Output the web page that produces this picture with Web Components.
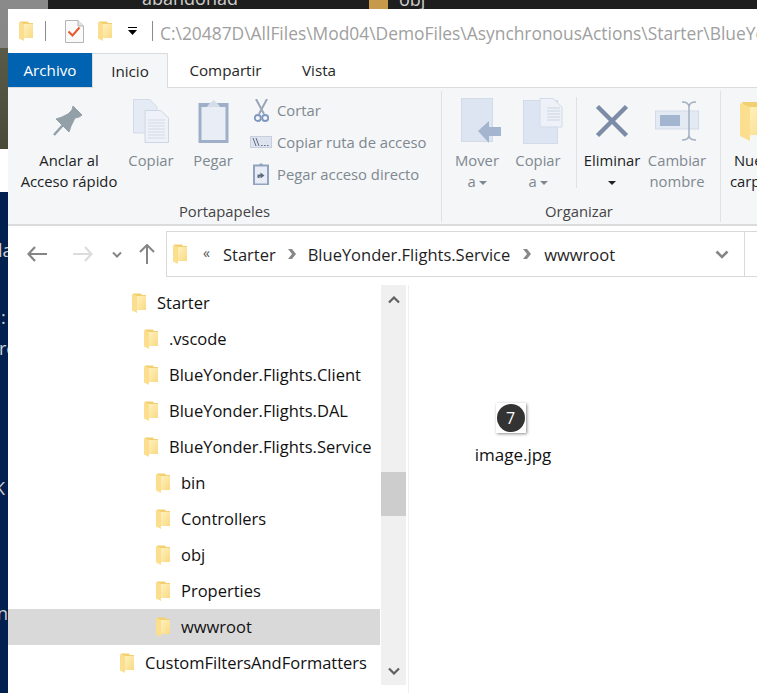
<!DOCTYPE html>
<html lang="es">
<head>
<meta charset="utf-8">
<title>wwwroot</title>
<style>
  html, body { margin: 0; padding: 0; }
  body { width: 757px; height: 693px; overflow: hidden; font-family: "Open Sans", "Noto Sans", sans-serif; }
</style>
</head>
<body>
<explorer-shot></explorer-shot>

<script>
const FONT = `"Open Sans", "Noto Sans", sans-serif`;

const folderSvg = (w, h) => `
  <svg width="${w}" height="${h}" viewBox="0 0 14 20" aria-hidden="true">
    <defs><linearGradient id="fg" x1="0" y1="0" x2="1" y2="1">
      <stop offset="0" stop-color="#fff0bd"/><stop offset="1" stop-color="#f8da82"/></linearGradient></defs>
    <path d="M1 .5H9L10 2H14V17H5Z" fill="#f2cf70"/>
    <path d="M5 3H14V17H5Z" fill="url(#fg)"/>
    <path d="M0 1 5 3V20L0 17.500Z" fill="#fbdf8e"/>
  </svg>`;

class FolderIcon extends HTMLElement {
  connectedCallback() {
    const w = +(this.getAttribute("w") || 14), h = +(this.getAttribute("h") || 20);
    this.attachShadow({ mode: "open" }).innerHTML =
      `<style>:host{display:inline-flex;flex:none}svg{display:block}</style>${folderSvg(w, h)}`;
  }
}
customElements.define("folder-icon", FolderIcon);

class TitleBar extends HTMLElement {
  constructor() {
    super();
    this.attachShadow({ mode: "open" }).innerHTML = `
      <style>
        :host { display: flex; align-items: center; height: 44px; background: #fff; padding-left: 11px; box-sizing: border-box; }
        .sep { width: 1px; height: 20px; background: #8c8c8c; flex: none; }
        .path { color: #a0a0a0; font: 17.4px ${FONT}; white-space: nowrap; margin: 3px 0 0 7px; }
        svg { display: block; flex: none; }
      </style>
      <folder-icon></folder-icon>
      <span class="sep" style="margin-left:12px"></span>
      <svg style="margin-left:19px" width="19" height="23" viewBox="0 0 19 23">
        <path d="M.5.5H13L18.500 6V22.500H.5Z" fill="#fafafa" stroke="#b5b5b5"/>
        <path d="M13 .5V6H18.500" fill="#e4e4e4" stroke="#b5b5b5"/>
        <path d="M3.500 11.500 7.500 15.500 14.500 7.500" fill="none" stroke="#e8592b" stroke-width="2"/>
      </svg>
      <folder-icon style="margin-left:14px"></folder-icon>
      <svg style="margin-left:16px" width="9" height="9" viewBox="0 0 9 9">
        <path d="M0 0H9V1H0ZM0 3H9L4.500 8Z" fill="#000"/>
      </svg>
      <span class="sep" style="margin-left:15px"></span>
      <span class="path">C:\\20487D\\AllFiles\\Mod04\\DemoFiles\\AsynchronousActions\\Starter\\BlueYo</span>`;
  }
}
customElements.define("title-bar", TitleBar);

class RibbonTabs extends HTMLElement {
  constructor() {
    super();
    this.attachShadow({ mode: "open" }).innerHTML = `
      <style>
        :host { display: flex; height: 35px; background: #fff; border-bottom: 1px solid #dadbdc; box-sizing: border-box; font: 15.2px ${FONT}; color: #262626; }
        span { display: flex; align-items: center; justify-content: center; box-sizing: border-box; }
        .file { width: 84px; background: #0063b1; color: #fff; }
        .home { width: 76px; height: 35px; background: #f5f6f7; border: 1px solid #dadbdc; border-bottom: 0; }
        .tab { width: 71px; margin-left: 22px; }
        .tab + .tab { width: 34px; margin-left: 41px; }
      </style>
      <span class="file">Archivo</span>
      <span class="home">Inicio</span>
      <span class="tab">Compartir</span>
      <span class="tab">Vista</span>`;
  }
}
customElements.define("ribbon-tabs", RibbonTabs);

class RibbonGroup extends HTMLElement {
  constructor() {
    super();
    this.attachShadow({ mode: "open" }).innerHTML = `
      <style>
        :host { display: flex; flex-direction: column; box-sizing: border-box; border-right: 1px solid #dfe1e4; margin-top: 3px; height: 131px; flex: none; }
        .items { display: flex; flex: 1; min-height: 0; }
        .label { height: 22px; text-align: center; font: 14.800px ${FONT}; color: #444; line-height: 22px; white-space: nowrap; padding-right: var(--label-shift, 0); }
      </style>
      <div class="items"><slot></slot></div>
      <div class="label"></div>`;
  }
  connectedCallback() {
    this.shadowRoot.querySelector(".label").textContent = this.getAttribute("label") || "";
  }
}
customElements.define("ribbon-group", RibbonGroup);

class RibbonButton extends HTMLElement {
  constructor() {
    super();
    this.attachShadow({ mode: "open" }).innerHTML = `
      <style>
        :host { display: flex; flex-direction: column; align-items: center; flex: none; font: 14.800px/21px ${FONT}; color: #808890; text-align: center; white-space: nowrap; box-sizing: border-box; }
        :host([on]) { color: #222; }
        .ico { height: 56px; display: flex; align-items: center; justify-content: center; margin-top: 2px; margin-bottom: 1px; }
      </style>
      <div class="ico"><slot name="icon"></slot></div>
      <div><slot></slot></div>`;
  }
}
customElements.define("ribbon-button", RibbonButton);

class RibbonSmall extends HTMLElement {
  constructor() {
    super();
    this.attachShadow({ mode: "open" }).innerHTML = `
      <style>
        :host { display: flex; align-items: center; height: 32px; font: 14.800px ${FONT}; color: #808890; white-space: nowrap; }
        .ico { width: 22px; display: flex; justify-content: center; margin-right: 5px; }
      </style>
      <div class="ico"><slot name="icon"></slot></div><slot></slot>`;
  }
}
customElements.define("ribbon-small", RibbonSmall);

class NavBar extends HTMLElement {
  constructor() {
    super();
    this.attachShadow({ mode: "open" }).innerHTML = `
      <style>
        :host { display: flex; align-items: center; height: 59px; background: #fff; padding: 5px 0 8px; box-sizing: border-box; }
        svg { display: block; flex: none; }
        .box { display: flex; align-items: center; flex: 1; margin-left: 11px; height: 46px; border: 1px solid #d9d9d9; border-right: 0; box-sizing: border-box; font: 16.500px ${FONT}; color: #1f1f1f; white-space: nowrap; }
        .end { margin-left: auto; width: 45px; height: 100%; display: flex; align-items: center; justify-content: center; border-right: 1px solid #d9d9d9; box-sizing: border-box; margin-right: 12px; }
        .chev { margin: 0 12px; }
        .chev.b { margin: 0 13px; }
      </style>
      <svg style="margin-left:19px" width="20" height="16" viewBox="0 0 20 16"><path d="M8 1 1.500 8 8 15M2 8H20" fill="none" stroke="#858585" stroke-width="2.200"/></svg>
      <svg style="margin-left:26px" width="20" height="16" viewBox="0 0 20 16"><path d="M12 1 18.500 8 12 15M18 8H0" fill="none" stroke="#dcdcdc" stroke-width="2.200"/></svg>
      <svg style="margin-left:19px" width="10" height="7" viewBox="0 0 10 7"><path d="M1 1.500 5 5.500 9 1.500" fill="none" stroke="#858585" stroke-width="2"/></svg>
      <svg style="margin-left:17px" width="16" height="20" viewBox="0 0 16 20"><path d="M1 8 8 1 15 8M8 1.500V20" fill="none" stroke="#858585" stroke-width="2"/></svg>
      <div class="box">
        <folder-icon style="margin-left:6px"></folder-icon>
        <span style="margin-left:16px;font-size:14px;color:#555;position:relative;top:-2px">«</span>
        <span style="margin-left:13px">Starter</span>
        <svg class="chev" width="8" height="10" viewBox="0 0 8 10"><path d="M0 0H4L8 5 4 10H0L4 5Z" fill="#888"/></svg>
        <span>BlueYonder.Flights.Service</span>
        <svg class="chev b" width="8" height="10" viewBox="0 0 8 10"><path d="M0 0H4L8 5 4 10H0L4 5Z" fill="#888"/></svg>
        <span>wwwroot</span>
        <div class="end"><svg width="14" height="9" viewBox="0 0 14 9"><path d="M1.500 1.500 7 7 12.500 1.500" fill="none" stroke="#858585" stroke-width="2.600"/></svg></div>
      </div>`;
  }
}
customElements.define("nav-bar", NavBar);

class TreeRow extends HTMLElement {
  constructor() {
    super();
    this.attachShadow({ mode: "open" }).innerHTML = `
      <style>
        :host { display: flex; align-items: center; height: 36px; padding-left: calc(var(--lvl, 0) * 12px + 112px); font: 16.500px ${FONT}; color: #111; white-space: nowrap; box-sizing: border-box; }
        :host([sel]) { background: #d9d9d9; }
        .t { margin-left: 11px; position: relative; top: -1px; }
      </style>
      <folder-icon></folder-icon><span class="t"><slot></slot></span>`;
  }
}
customElements.define("tree-row", TreeRow);

class NavTree extends HTMLElement {
  constructor() {
    super();
    this.attachShadow({ mode: "open" }).innerHTML = `
      <style>
        :host { display: flex; width: 401px; height: 408px; flex: none; background: #fff; border-right: 1px solid #f0f0f0; box-sizing: border-box; }
        .rows { width: 372px; flex: none; padding-right: 1px; }
        .bar { width: 25px; height: 400px; background: #f0f0f0; display: flex; flex-direction: column; align-items: center; }
        .btn { height: 29px; display: flex; align-items: center; justify-content: center; flex: none; }
        .track { flex: 1; width: 100%; }
        .thumb { height: 44px; margin-top: 158px; background: #cdcdcd; }
        svg { display: block; }
      </style>
      <div class="rows"><slot></slot></div>
      <div class="bar">
        <div class="btn"><svg width="12" height="8" viewBox="0 0 12 8"><path d="M1 6.500 6 1.500 11 6.500" fill="none" stroke="#606060" stroke-width="2.200"/></svg></div>
        <div class="track"><div class="thumb"></div></div>
        <div class="btn"><svg width="12" height="8" viewBox="0 0 12 8"><path d="M1 1.500 6 6.500 11 1.500" fill="none" stroke="#606060" stroke-width="2.200"/></svg></div>
      </div>`;
  }
}
customElements.define("nav-tree", NavTree);

class FileItem extends HTMLElement {
  constructor() {
    super();
    this.attachShadow({ mode: "open" }).innerHTML = `
      <style>
        :host { display: flex; flex-direction: column; align-items: center; width: 100px; font: 17px/20px ${FONT}; color: #111; }
        .thumb { width: 30px; height: 30px; background: #fff; box-shadow: 1px 1px 3px rgba(0,0,0,.45); display: flex; align-items: center; justify-content: center; margin-right: 5px; margin-bottom: 12px; }
        .num { width: 28px; height: 28px; border-radius: 50%; background: #333; color: #fff; font: 16px/28px ${FONT}; text-align: center; }
      </style>
      <div class="thumb"><div class="num"><slot name="num"></slot></div></div>
      <div><slot></slot></div>`;
  }
}
customElements.define("file-item", FileItem);

class ExplorerShot extends HTMLElement {
  constructor() {
    super();
    this.attachShadow({ mode: "open" }).innerHTML = `
      <style>
        :host { display: block; position: relative; width: 757px; height: 693px; overflow: hidden; padding: 9px 0 0 8px; box-sizing: border-box;
          background: linear-gradient(#002050,#002050) 0 192px/8px 501px no-repeat,
                      linear-gradient(#fff,#fff) 0 149px/8px 43px no-repeat,
                      linear-gradient(#5a5a48,#4a4a38) 0 48px/8px 101px no-repeat,
                      linear-gradient(#1e1e1e,#1e1e1e) 48px 0/709px 9px no-repeat,
                      linear-gradient(#8a8a8a,#5e5e5e); }
        .bg { position: absolute; color: #cfcfcf; font: 18px/24px ${FONT}; white-space: nowrap; }
        .orange { position: absolute; left: 369px; top: 0; width: 19px; height: 9px; background: #c79a4b; }
        .win { display: block; position: relative; z-index: 1; background: #fff; height: 684px; }
        .ribbon { display: flex; height: 138px; background: #f4f6f8; border-bottom: 2px solid #dadbdc; box-sizing: border-box; overflow: hidden; }
        .body { display: flex; background: #fff; }
        .pane { flex: 1; display: flex; padding: 118px 0 0 54px; box-sizing: border-box; }
        .col { display: flex; flex-direction: column; padding-top: 3px; margin-left: 5px; }
        .vsep { width: 1px; height: 91px; background: #dfe1e4; margin: 6px 0 0 12px; flex: none; }
        .dd { display: inline-block; width: 0; height: 0; border: 4px solid transparent; border-top-color: currentColor; border-bottom: 0; vertical-align: middle; margin-left: 3px; }
        svg { display: block; }
      </style>
      <span class="bg" style="left:142px;top:-14px">abandonad</span>
      <span class="orange"></span>
      <span class="bg" style="left:399px;top:-13px">obj</span>
      <span class="bg" style="left:-2px;top:238px">la</span>
      <span class="bg" style="left:1px;top:305px">:</span>
      <span class="bg" style="left:-1px;top:336px">re</span>
      <span class="bg" style="left:-6px;top:476px">K</span>
      <span class="bg" style="left:-3px;top:601px">n</span>
      <div class="win">
        <title-bar></title-bar>
        <ribbon-tabs></ribbon-tabs>
        <div class="ribbon">
          <ribbon-group label="Portapapeles" style="width:434px">
            <ribbon-button on style="width:122px;margin-right:-9px">
              <svg slot="icon" width="32" height="32" viewBox="0 0 32 32"><path d="M20 1 29 10 26 12 22 13 18 21 16 27 3 14 9 12 15 9 19 5Z" fill="#93a0a8" stroke="#93a0a8" stroke-linejoin="round"/><path d="M1 30 10 20" stroke="#93a0a8" stroke-width="2.500"/></svg>
              Anclar al<br>Acceso rápido
            </ribbon-button>
            <ribbon-button style="width:60px">
              <svg slot="icon" width="36" height="44" viewBox="0 0 36 44"><path d="M.5.500H17L24 8V34H.5Z" fill="#e4ebf5" stroke="#d3dbe6"/><path d="M12 11.500H28L35.500 19V43.500H12Z" fill="#eef2f8" stroke="#cdd6e2"/><path d="M15 21H32M15 24H32M15 27H32M15 30H32M15 33H32M15 36H32M15 39H32" stroke="#d3dae5"/></svg>
              Copiar
            </ribbon-button>
            <ribbon-button style="width:64px">
              <svg slot="icon" width="31" height="43" viewBox="0 0 31 43"><rect x=".5" y="3" width="30" height="40" fill="#9fafc8"/><rect x="3.500" y="7" width="24" height="33" fill="#e8edf6"/><path d="M9 7 11 4 15.500 0 20 4 22 7Z" fill="#d5dcea"/></svg>
              Pegar
            </ribbon-button>
            <div class="col">
              <ribbon-small><svg slot="icon" width="15" height="23" viewBox="0 0 15 23"><path d="M2 0 10 15M13 0 5 15" stroke="#9aa6b8" stroke-width="2" fill="none"/><circle cx="3.800" cy="19" r="3" fill="none" stroke="#7e97c0" stroke-width="1.800"/><circle cx="11.200" cy="19" r="3" fill="none" stroke="#7e97c0" stroke-width="1.800"/></svg>Cortar</ribbon-small>
              <ribbon-small><svg slot="icon" width="22" height="12" viewBox="0 0 22 12"><rect x=".5" y=".5" width="21" height="11" fill="#dde4f0" stroke="#c5cfe0"/><path d="M3 2 6 10M6 2 9 10" stroke="#5d6a80" fill="none"/><path d="M11 9.500H19" stroke="#5d6a80" stroke-dasharray="1.500 1.500"/></svg>Copiar ruta de acceso</ribbon-small>
              <ribbon-small><svg slot="icon" width="16" height="22" viewBox="0 0 16 22"><rect x="1" y="2.500" width="14" height="19" fill="#e8edf5" stroke="#92a3bd" stroke-width="2"/><path d="M5 2.500 8 0 11 2.500Z" fill="#92a3bd"/><path d="M4.500 15V11.500H7.500V9.500L11.500 12.500 7.500 15.500V13.500H6.500V15Z" fill="#5d6a80"/></svg>Pegar acceso directo</ribbon-small>
            </div>
          </ribbon-group>
          <ribbon-group label="Organizar" style="width:279px;--label-shift:4px">
            <ribbon-button style="width:70px">
              <svg slot="icon" style="margin-left:8px" width="40" height="46" viewBox="0 0 40 46"><rect x=".5" y=".5" width="31" height="43" fill="#dde5f2" stroke="#d3dbe8"/><path d="M17 33 28 23V29H40V38H28V45Z" fill="#a4b5cf"/></svg>
              Mover<br>a<span class="dd"></span>
            </ribbon-button>
            <ribbon-button style="width:52px">
              <svg slot="icon" style="margin-left:10px" width="40" height="46" viewBox="0 0 40 46"><rect x=".5" y="2.500" width="34" height="43" fill="#dde5f2" stroke="#d3dbe8"/><path d="M17 .5H30L39 9V29H17Z" fill="#eef2f8" stroke="#d3dbe8"/><path d="M24 10H37M24 13H37M24 16H37M24 19H37M24 22H37" stroke="#cbd4e2"/></svg>
              Copiar<br>a<span class="dd"></span>
            </ribbon-button>
            <div class="vsep"></div>
            <ribbon-button on style="width:70px">
              <svg slot="icon" width="34" height="34" viewBox="0 0 34 34"><path d="M2.500 2.500 31.500 31.500M31.500 2.500 2.500 31.500" stroke="#7c8ba6" stroke-width="4.500"/></svg>
              Eliminar<br><span class="dd" style="margin:0"></span>
            </ribbon-button>
            <ribbon-button style="width:60px">
              <svg slot="icon" width="44" height="40" viewBox="0 0 44 40"><rect x=".5" y="10" width="43" height="18" fill="#e4eaf4" stroke="#d3dbe8"/><rect x="5" y="14" width="20" height="11" fill="#a4b5cf"/><path d="M27 1Q34 1 34 6V34Q34 39 27 39M41 1Q34 1 34 6M34 34Q34 39 41 39" fill="none" stroke="#a4b0c2" stroke-width="1.500"/></svg>
              Cambiar<br>nombre
            </ribbon-button>
          </ribbon-group>
          <ribbon-group style="width:60px;border:0">
            <ribbon-button on style="width:70px">
              <folder-icon slot="icon" w="28" h="40" style="margin-left:-4px"></folder-icon>
              Nueva<br>carpeta
            </ribbon-button>
          </ribbon-group>
        </div>
        <nav-bar></nav-bar>
        <div class="body">
          <nav-tree>
            <tree-row style="--lvl:1">Starter</tree-row>
            <tree-row style="--lvl:2">.vscode</tree-row>
            <tree-row style="--lvl:2">BlueYonder.Flights.Client</tree-row>
            <tree-row style="--lvl:2">BlueYonder.Flights.DAL</tree-row>
            <tree-row style="--lvl:2">BlueYonder.Flights.Service</tree-row>
            <tree-row style="--lvl:3">bin</tree-row>
            <tree-row style="--lvl:3">Controllers</tree-row>
            <tree-row style="--lvl:3">obj</tree-row>
            <tree-row style="--lvl:3">Properties</tree-row>
            <tree-row style="--lvl:3" sel>wwwroot</tree-row>
            <tree-row>CustomFiltersAndFormatters</tree-row>
          </nav-tree>
          <div class="pane">
            <file-item><span slot="num">7</span>image.jpg</file-item>
          </div>
        </div>
      </div>`;
  }
}
customElements.define("explorer-shot", ExplorerShot);
</script>
</body>
</html>
